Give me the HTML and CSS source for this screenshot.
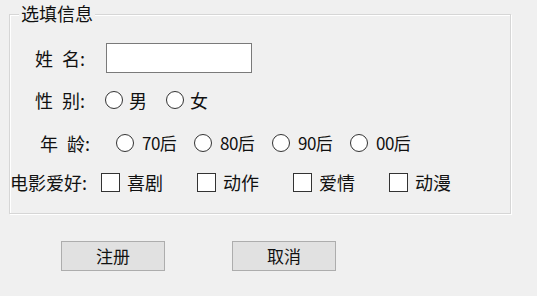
FILE: index.html
```html
<!DOCTYPE html>
<html lang="zh-CN">
<head>
<meta charset="utf-8">
<title>选填信息</title>
<link rel="stylesheet" href="styles.css">
</head>
<body>
<div class="group">
  <span class="legend">选填信息</span>
  <div class="row row-name">
    <span class="label lbl-name">姓&ensp;名:</span>
    <input class="textbox" type="text">
  </div>
  <div class="row row-sex">
    <span class="label lbl-sex">性&ensp;别:</span>
    <span class="opt opt-sex"><span class="radio"></span><span class="txt">男</span></span>
    <span class="opt opt-sex"><span class="radio"></span><span class="txt">女</span></span>
  </div>
  <div class="row row-age">
    <span class="label lbl-age">年&ensp;龄:</span>
    <span class="opt opt-age"><span class="radio"></span><span class="txt age">70后</span></span>
    <span class="opt opt-age"><span class="radio"></span><span class="txt age">80后</span></span>
    <span class="opt opt-age"><span class="radio"></span><span class="txt age">90后</span></span>
    <span class="opt opt-age"><span class="radio"></span><span class="txt age">00后</span></span>
  </div>
  <div class="row row-hobby">
    <span class="label lbl-hobby">电影爱好:</span>
    <span class="opt opt-hobby"><span class="check"></span><span class="txt">喜剧</span></span>
    <span class="opt opt-hobby"><span class="check"></span><span class="txt">动作</span></span>
    <span class="opt opt-hobby"><span class="check"></span><span class="txt">爱情</span></span>
    <span class="opt opt-hobby"><span class="check"></span><span class="txt">动漫</span></span>
  </div>
</div>
<div class="buttons">
  <button class="btn btn-reg" type="button">注册</button>
  <button class="btn btn-cancel" type="button">取消</button>
</div>
</body>
</html>
```
FILE: styles.css
```css
html, body {
  margin: 0;
  padding: 0;
  background: #f0f0f0;
}
body {
  font-family: "Noto Sans CJK SC", "Noto Sans", sans-serif;
  font-size: 18px;
  color: #111;
  width: 537px;
  height: 296px;
  overflow: hidden;
}
.group {
  position: relative;
  box-sizing: border-box;
  margin: 14px 0 0 9px;
  width: 502px;
  height: 200px;
  border: 1px solid #d6d6d6;
  box-shadow: 1px 1px 0 #ffffff, inset 1px 1px 0 #ffffff;
}
.legend {
  position: absolute;
  top: -13px;
  left: 9px;
  padding: 0 2px;
  background: #f0f0f0;
  line-height: 22px;
  font-size: 18px;
}
.row {
  display: flex;
  align-items: center;
  height: 30px;
  line-height: 30px;
  white-space: nowrap;
}
.row-name { margin-top: 28px; }
.row-sex { margin-top: 12px; }
.row-age { margin-top: 13px; }
.row-hobby { margin-top: 9px; }
.label {
  flex: none;
  box-sizing: border-box;
}
.lbl-name { width: 96px; padding-left: 25px; }
.lbl-sex { width: 95px; padding-left: 25px; }
.lbl-age { width: 106px; padding-left: 30px; }
.lbl-hobby { width: 91px; padding-left: 0; }
.textbox {
  box-sizing: border-box;
  width: 146px;
  height: 30px;
  margin: 0;
  border: 1px solid #7a7a7a;
  background: #ffffff;
  outline: none;
  padding: 0 3px;
}
.opt {
  flex: none;
  display: flex;
  align-items: center;
}
.opt-sex { width: 61px; }
.opt-age { width: 78px; }
.opt-hobby { width: 96px; }
.radio {
  box-sizing: border-box;
  flex: none;
  width: 18px;
  height: 18px;
  border: 1px solid #333333;
  border-radius: 50%;
  background: #ffffff;
}
.check {
  box-sizing: border-box;
  flex: none;
  width: 19px;
  height: 19px;
  border: 1px solid #333333;
  background: #ffffff;
}
.txt {
  margin-left: 6px;
}
.opt-age .txt { margin-left: 8px; }
.opt-hobby .txt { margin-left: 7px; }
.age {
  font-size: 17px;
  letter-spacing: -0.5px;
}
.buttons {
  display: flex;
  margin-top: 27px;
  padding-left: 61px;
  gap: 67px;
}
.btn {
  box-sizing: border-box;
  width: 104px;
  height: 30px;
  margin: 0;
  padding: 0;
  background: #e1e1e1;
  border: 1px solid #adadad;
  font-family: "Noto Sans CJK SC", "Noto Sans", sans-serif;
  font-size: 17px;
  color: #111;
  line-height: 28px;
}
```
